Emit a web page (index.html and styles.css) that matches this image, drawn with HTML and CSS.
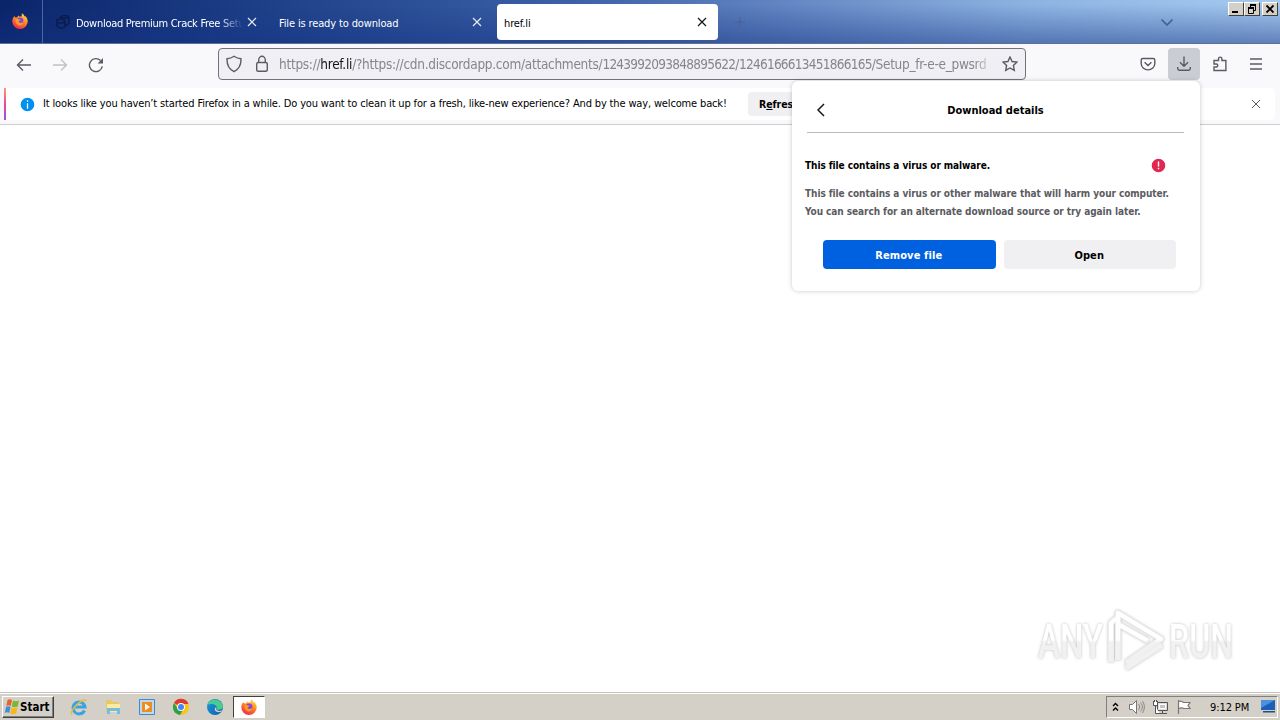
FILE: index.html
```html
<!DOCTYPE html>
<html>
<head>
    <meta charset="utf-8" />
    <title>href.li</title>
    <link rel="stylesheet" href="styles.css">
</head>
<body>
    <svg class="defs">
        <defs>
            <linearGradient id="fox" x1="0.8" y1="0" x2="0.3" y2="1">
                <stop offset="0" stop-color="#ffe14a" />
                <stop offset="0.45" stop-color="#ff8a1e" />
                <stop offset="1" stop-color="#f0264f" />
            </linearGradient>
            <linearGradient id="edge" x1="0" y1="0" x2="1" y2="1">
                <stop offset="0" stop-color="#1aa0e0" />
                <stop offset="1" stop-color="#0c59a4" />
            </linearGradient>
            <linearGradient id="mark" gradientUnits="userSpaceOnUse" x1="0" y1="34" x2="0" y2="36">
                <stop offset="0" stop-color="#fff" />
                <stop offset="1" stop-color="#f1f1f1" />
            </linearGradient>
            <symbol id="firefox" viewBox="0 0 16 16">
                <path fill="url(#fox)" d="M2.2 3.2 3.6 4.6 5.4 4.2 6.2 2.4 7.4 3.6 9.6 3.4 9.9 0.3C11.4 1.1 12.2 2.5 12.8 3.6L13.6 3.2C15 4.8 15.8 6.6 15.7 8.6A7.7 7.4 0 0 1 .3 8.6C.2 6.4 1 4.6 2.2 3.2z" />
                <circle cx="8.2" cy="7.6" r="3.2" fill="#8a45d8" />
                <path fill="#ff9b22" d="M3.6 6.2C5.2 5.6 6.4 6.2 8.6 6.6 8.4 7.8 6.8 7.8 6.6 8.6 6.9 10.4 9.4 10.2 11 9.2 10.6 11.8 8.4 13 6.4 12.2 4.2 11.2 3 9 3.6 6.2z" />
            </symbol>
            <symbol id="cross" viewBox="0 0 10 10">
                <path d="M1 1l8 8M9 1l-8 8" />
            </symbol>
        </defs>
    </svg>

    <div class="tabbar">
        <div class="firefox-view">
            <svg width="16" height="16"><use href="#firefox" /></svg>
        </div>
        <div class="tab">
            <svg class="favicon" width="16" height="16" viewBox="0 0 16 16"><path d="M5 4C6 1 12 1 14 3V9C12 12 9 11 9 11M2 6C4 4 9 5 10 7V13C7 15 3 14 2 12zM2 8c3 2 6 1 8 0M6 3c3 2 6 1 8 0" /></svg>
            <span class="tab-label label-fade">Download Premium Crack Free Setu</span>
            <svg class="tab-close" width="10" height="10"><use href="#cross" /></svg>
        </div>
        <div class="tab">
            <span class="tab-label">File is ready to download</span>
            <svg class="tab-close" width="10" height="10"><use href="#cross" /></svg>
        </div>
        <div class="tab tab-active">
            <span class="tab-label">href.li</span>
            <svg class="tab-close" width="10" height="10"><use href="#cross" /></svg>
        </div>
        <svg class="tab-new" width="10" height="10" viewBox="0 0 10 10"><path d="M5 0v10M0 5h10" /></svg>
        <svg class="tab-list" width="14" height="8" viewBox="0 0 14 8"><path d="M1.5 1.5 7 7l5.500-5.500" /></svg>
        <div class="window-buttons">
            <span class="win-btn"><svg width="12" height="10" viewBox="0 0 12 10"><path d="M2 8h6" stroke-width="2" /></svg></span>
            <span class="win-btn"><svg width="12" height="10" viewBox="0 0 12 10"><path d="M4 1h6M2 4h6" stroke-width="2" /><path d="M4.500 2v2M9.500 2v4.500H8M2.500 4v5.500h5V4" /></svg></span>
            <span class="win-btn win-close"><svg width="12" height="10" viewBox="0 0 12 10"><path d="M2.500 1.500l7 7M9.500 1.500l-7 7" stroke-width="1.800" /></svg></span>
        </div>
    </div>

    <div class="navbar">
        <div class="nav-history">
            <svg width="16" height="16" viewBox="0 0 16 16"><path d="M15 8H1.500M7 2.500 1.500 8l5.500 5.500" /></svg>
            <svg class="disabled" width="16" height="16" viewBox="0 0 16 16"><path d="M1 8h13.500M9 2.500l5.500 5.500-5.500 5.500" /></svg>
            <svg width="16" height="16" viewBox="0 0 16 16"><path d="M14.300 9.400A6.500 6.500 0 1 1 12.500 3.500" /><path class="solid" d="M15 1v5.400H9.600z" /></svg>
        </div>
        <div class="urlbar">
            <svg width="16" height="18" viewBox="0 0 16 18"><path d="M8 1.300C10 2.700 12.500 3.600 15 3.800 15.200 9.500 13 14.300 8 16.700 3 14.300.8 9.500 1 3.800 3.500 3.600 6 2.700 8 1.300z" /></svg>
            <svg class="lock" width="14" height="18" viewBox="0 0 14 18"><rect x="1.700" y="7.500" width="10.600" height="8.800" rx="1.500" /><path d="M3.700 7.500V5a3.300 3.700 0 0 1 6.600 0v2.500" /></svg>
            <span class="url">https://<b>href.li</b>/?https://cdn.discordapp.com/attachments/<span class="digits">1243992093848895622</span>/<span class="digits">1246166613451866165</span>/Setup_fr-e-e_pwsrd</span>
            <svg width="16" height="16" viewBox="0 0 16 16"><path d="M8 1l2.100 4.500 4.900.6-3.600 3.400.9 4.900L8 12l-4.300 2.400.9-4.900L1 6.100l4.900-.6z" /></svg>
        </div>
        <div class="nav-tools">
            <span class="tool"><svg width="16" height="16" viewBox="0 0 16 16"><path d="M2.700 2.500h10.600a1.500 1.500 0 0 1 1.500 1.500v3.500a6.800 6.400 0 0 1-13.600 0V4a1.500 1.500 0 0 1 1.500-1.500zM4.600 6.300 8 9.600l3.400-3.300" /></svg></span>
            <span class="tool tool-open"><svg width="16" height="16" viewBox="0 0 16 16"><path d="M8 .5v9.500M4 6.200l4 4 4-4M1.700 11v1.500a1.700 1.700 0 0 0 1.700 1.700h9.200a1.700 1.700 0 0 0 1.700-1.700V11" /></svg></span>
            <span class="tool"><svg width="16" height="16" viewBox="0 0 16 16"><path d="M2 14.500V11H4.300a1.500 1.500 0 0 0 0-3H2V4.500H6.500V2.800a1.700 1.700 0 0 1 3.400 0V4.500h4v10z" /></svg></span>
            <span class="tool"><svg width="16" height="16" viewBox="0 0 16 16"><path d="M2 3h12M2 8h12M2 13h12" /></svg></span>
        </div>
    </div>

    <div class="notification">
        <div class="notification-body">
            <svg class="info" width="15" height="15" viewBox="0 0 15 15"><circle cx="7.500" cy="7.500" r="7.500" /><path d="M7.500 3.200v1.500M7.500 6.200v5.500" /></svg>
            <span class="notification-text">It looks like you haven’t started Firefox in a while. Do you want to clean it up for a fresh, like-new experience? And by the way, welcome back!</span>
            <button class="refresh">R<u>e</u>fresh Firefox…</button>
            <svg class="notification-close" width="10" height="10"><use href="#cross" /></svg>
        </div>
    </div>

    <div class="content"></div>

    <!--下载详情面板-->
    <div class="panel">
        <div class="panel-header">
            <svg width="8" height="14" viewBox="0 0 8 14"><path d="M7 1 1 7l6 6" /></svg>
            <span class="panel-title">Download details</span>
        </div>
        <div class="panel-warning">
            <span>This file contains a virus or malware.</span>
            <svg width="15" height="15" viewBox="0 0 15 15"><circle cx="7.500" cy="7.500" r="7.500" /><path d="M7.500 3.500v5M7.500 9.800v1.500" /></svg>
        </div>
        <p class="panel-text">This file contains a virus or other malware that will harm your computer.<br>You can search for an alternate download source or try again later.</p>
        <div class="panel-buttons">
            <button class="btn btn-primary">Remove file</button>
            <button class="btn">Open</button>
        </div>
    </div>

    <!--水印-->
    <svg class="watermark" width="220" height="80" viewBox="0 0 220 80">
        <text x="4" y="52" textLength="65" lengthAdjust="spacingAndGlyphs">ANY</text>
        <path d="M77 56V17L83 12M84 54V7L127 33 92 57M84 18l30 17M92 62l36-23" class="mark-shade" />
        <path d="M77 56V17L83 12M84 54V7L127 33 92 57M84 18l30 17M92 62l36-23" class="mark" />
        <text x="135" y="52" textLength="64" lengthAdjust="spacingAndGlyphs">RUN</text>
    </svg>

    <div class="taskbar">
        <div class="start">
            <svg width="17" height="16" viewBox="0 0 17 16">
                <path fill="#e8622a" d="M4.500 1C6 0 7.500 0 9 1L7.800 7C6.300 6 4.800 6 3.300 7z" />
                <path fill="#7db72f" d="M10 1.400c1.500 1 4 1 6 0L14.700 7.500c-2 1-4.500 1-5.900 0z" />
                <path fill="#3f8fd8" d="M3 8c1.500-1 3-1 4.500 0L6.300 14C4.800 13 3.300 13 1.800 14z" />
                <path fill="#f6b91a" d="M8.500 8.400c1.500 1 4 1 6 0l-1.300 6.100c-2 1-4.500 1-5.900 0z" />
            </svg>
            <span>Start</span>
        </div>
        <div class="launch">
            <svg width="18" height="18" viewBox="0 0 18 18"><path fill="none" stroke="#3ba4e0" stroke-width="3" d="M14.500 12.500A6 6 0 1 1 15 9H4" /><path fill="none" stroke="#e8bd3c" stroke-width="1.500" d="M2 16.500C-1 13 12 0 16.500 2.500" /></svg>
            <svg width="18" height="18" viewBox="0 0 18 18"><path fill="#e8c860" d="M2 2h5l1 2h7v10H2z" /><path fill="#faeaa2" d="M3 6h13v8H3z" /><path fill="#75bde3" d="M3 10h13v6h-3v-3H6v3H3z" /></svg>
            <svg width="18" height="18" viewBox="0 0 18 18"><path fill="#b8daf4" stroke="#4888c0" d="M1.500 1.500h15v15h-15z" /><path fill="#f28a1c" d="M4 4h10v10H4z" /><path fill="#fff" d="M7 5.500v7L12 9z" /></svg>
            <svg width="18" height="18" viewBox="0 0 18 18"><circle cx="9" cy="9" r="8" fill="#f9c61b" /><path fill="#df3a2e" d="M9 9 2 5a8 8 0 0 1 14.500 1H9z" /><path fill="#2e9e4f" d="M2 5a8 8 0 0 0 6 12l3.500-6H6z" /><circle cx="9" cy="9" r="3.900" fill="#fff" /><circle cx="9" cy="9" r="3" fill="#4285f4" /></svg>
            <svg width="18" height="18" viewBox="0 0 18 18"><circle cx="9" cy="9" r="8" fill="url(#edge)" /><path fill="#4ccb91" d="M1.500 6.500C4 0 15 0 17 8c0 4-4 4.500-6.500 3.200C12.500 8 8 4.500 1.500 6.500z" /><path fill="#d4d0c8" d="M10.500 8.500c-1.500 4 2 5.500 6 3.500L14.600 14C9 15 7 11 10.500 8.500z" /></svg>
        </div>
        <div class="task-active"><svg width="16" height="16"><use href="#firefox" /></svg></div>
        <div class="tray">
            <svg width="7" height="10" viewBox="0 0 7 10"><path d="M1 4l2.500-2.500L6 4M1 8.500 3.500 6 6 8.500" fill="none" stroke="#000" stroke-width="1.400" /></svg>
            <svg class="sound" width="17" height="16" viewBox="0 0 17 16"><path d="M1.500 5.500h3l4-4v13l-4-4h-3z" fill="#fff" stroke="#777" /><path d="M10.500 5c1.500 2 1.500 4 0 6M12.500 3.500c2.500 3 2.500 6 0 9M14.500 2c2.500 4 2.500 8 0 12" fill="none" stroke="#888" /></svg>
            <svg class="network" width="17" height="16" viewBox="0 0 17 16"><path d="M5.500 3.500h10v8h-10zM7 14.500h8M10.500 12v2" fill="#ddd" stroke="#555" /><path d="M7.500 5.500h6v4h-6z" fill="#c4c4c4" stroke="#fff" /><path d="M1.500 2v4.500h4V2M3.500 7v7.500h4M2.500 1v2M4.500 1v2" fill="#fff" stroke="#555" /></svg>
            <svg class="flag" width="17" height="16" viewBox="0 0 17 16"><path d="M2.500 1v14M2.500 2.500c3-1 4 0 5 1h6.500l-2 3 2 3H8c-2-1-3-1-5.500 0" fill="#fff" stroke="#777" stroke-width="1.200" /></svg>
            <span class="clock">9:12 PM</span>
            <svg width="16" height="13" viewBox="0 0 16 13"><path d="M1 0h14v10H1z" fill="#1d5fb8" /><path d="M1 0h14L1 8z" fill="#4c91dc" /><path d="M3 11h12v1.500H3z" fill="#264b7e" /></svg>
        </div>
    </div>
</body>
</html>
```

FILE: styles.css
```css
* {
    box-sizing: border-box
}

body {
    margin: 0;
    width: 1280px;
    height: 720px;
    overflow: hidden;
    display: flex;
    flex-direction: column;
    position: relative;
    background: #fff;
    color: #000;
    font-family: "DejaVu Sans Condensed", "DejaVu Sans", sans-serif;
    font-stretch: condensed;
    font-size: 11px;
    white-space: nowrap
}

svg {
    flex: none;
    display: block
}

button {
    font: inherit;
    border: 0;
    padding: 0
}

.defs {
    position: absolute;
    width: 0;
    height: 0
}

/*标签栏*/
.tabbar {
    display: flex;
    align-items: center;
    flex: none;
    height: 44px;
    background: linear-gradient(to bottom, transparent 10%, rgba(20,50,130,.48)), linear-gradient(100deg, #0a246a, #1d3f88 20%, #3d62a8 45%, #6688c4 62%, #8db3e2 80%, #a6caf0);
    border-bottom: 1px solid #5f7094
}

.firefox-view {
    width: 43px;
    height: 43px;
    margin-right: 4px;
    padding: 13px 0 0 12px;
    border-right: 1px solid #4b67a0
}

.tab {
    display: flex;
    align-items: center;
    width: 221px;
    height: 36px;
    margin: 0 4px 0 0;
    padding: 0 11px 0 7px;
    border-radius: 4px;
    color: #fff
}

.favicon {
    margin: 0 5px 0 1px;
    fill: none;
    stroke: #0b1d4e;
    stroke-width: 1.5
}

.tab-label {
    flex: 1;
    padding-top: 3px;
    letter-spacing: -.14px
}

.label-fade {
    overflow: hidden;
    margin-right: 4px;
    letter-spacing: -.28px;
    -webkit-mask-image: linear-gradient(to left, transparent, #000 24px);
    mask-image: linear-gradient(to left, transparent, #000 24px)
}

.tab-close {
    fill: none;
    stroke: #e6ebf7;
    stroke-width: 1.2
}

.tab-active {
    background: #fff;
    color: #000
}

    .tab-active .tab-close {
        stroke: #15141a
    }

.tab-new {
    margin-left: 13px;
    fill: none;
    stroke: #4a5f91
}

.tab-list {
    margin-left: auto;
    fill: none;
    stroke: #405a8d;
    stroke-width: 1.5
}

.window-buttons {
    display: flex;
    align-self: flex-start;
    margin: 2px 2px 0 54px
}

.win-btn {
    width: 16px;
    height: 14px;
    padding: 1px;
    background: #d4d0c8;
    border: 1px solid;
    border-color: #fff #404040 #404040 #fff
}

    .win-btn svg {
        fill: none;
        stroke: #000
    }

.win-close {
    margin-left: 2px
}

/*导航栏*/
.navbar {
    display: flex;
    align-items: center;
    flex: none;
    height: 44px;
    padding: 0 8px 4px 16px;
    background: #f9f9fb
}

    .navbar svg {
        fill: none;
        stroke: #5b5b66;
        stroke-width: 1.4
    }

    .navbar .disabled {
        stroke: #c0c0c6
    }

    .navbar .solid {
        fill: #5b5b66;
        stroke: none
    }

.nav-history {
    display: flex;
    gap: 20px;
    padding-top: 1px
}

.urlbar {
    display: flex;
    align-items: center;
    width: 808px;
    height: 32px;
    margin-left: 114px;
    padding: 0 7px;
    background: #f0f0f4;
    border: 1px solid #72727a;
    border-radius: 4px
}

.lock {
    margin: 0 10px 0 13px
}

.url {
    flex: 1;
    overflow: hidden;
    margin-right: 8px;
    color: #85858d;
    font-size: 13.500px;
    letter-spacing: -.28px;
    -webkit-mask-image: linear-gradient(to left, transparent, #000 20px);
    mask-image: linear-gradient(to left, transparent, #000 20px)
}

    .url b {
        color: #15141a;
        font-weight: normal
    }

.digits {
    letter-spacing: -.74px
}

.nav-tools {
    display: flex;
    gap: 4px;
    margin-left: auto
}

.tool {
    width: 32px;
    height: 32px;
    padding: 8px;
    border-radius: 4px
}

.tool-open {
    background: #cbcdd4
}

/*通知栏*/
.notification {
    flex: none;
    height: 37px;
    padding: 0 5px 4px 4px;
    background: #f9f9fb;
    border-bottom: 1px solid #ccc
}

.notification-body {
    display: flex;
    align-items: center;
    height: 32px;
    padding: 0 14px;
    background: linear-gradient(#f79a72, #e84a9a 50%, #9059d8) no-repeat left / 2px 100%, #fff;
    border-radius: 0 4px 4px 0
}

.info {
    margin: 0 8px 0 2px;
    fill: #0090ed;
    stroke: #fff;
    stroke-width: 1.3
}

.notification-text {
    width: 705px;
    padding-bottom: 2px;
    letter-spacing: -.15px
}

.refresh {
    width: 112px;
    height: 24px;
    background: #f0f0f2;
    border-radius: 4px;
    font-weight: bold;
    font-size: 10.500px;
    letter-spacing: -.1px
}

.notification-close {
    margin-left: auto;
    fill: none;
    stroke: #5b5b66
}

.content {
    flex: 1
}

/*下载面板*/
.panel {
    position: absolute;
    left: 792px;
    top: 81px;
    width: 408px;
    height: 210px;
    padding: 0 16px 0 13px;
    background: #fff;
    border-radius: 6px;
    box-shadow: 0 0 4px rgba(58,57,68,.28);
    font-weight: bold
}

.panel-header {
    display: flex;
    align-items: center;
    height: 52px;
    margin-left: 2px;
    padding: 6px 0 0 10px;
    border-bottom: 1px solid #b8b8bc
}

    .panel-header svg {
        fill: none;
        stroke: #15141a;
        stroke-width: 1.5
    }

.panel-title {
    flex: 1;
    padding: 2px 18px 0 0;
    text-align: center
}

.panel-warning {
    display: flex;
    align-items: center;
    justify-content: space-between;
    height: 15px;
    margin-top: 25px;
    padding-right: 18px;
    font-size: 10px;
    letter-spacing: -.07px
}

    .panel-warning svg {
        fill: #e22850;
        stroke: #fff;
        stroke-width: 1.4
    }

.panel-text {
    margin: 12px 0 0;
    color: #5b5b5f;
    font-size: 10px;
    line-height: 18px;
    letter-spacing: -.07px
}

.panel-buttons {
    display: flex;
    gap: 8px;
    margin: 19px 0 0 18px;
    width: 353px
}

.btn {
    flex: 1;
    height: 29px;
    padding: 1px 1px 0 0;
    background: #f0f0f2;
    border-radius: 4px;
    letter-spacing: .1px
}

.btn-primary {
    background: #0061e0;
    color: #fff
}

.watermark {
    position: absolute;
    left: 1034px;
    top: 606px;
    filter: drop-shadow(0 0 1.500px rgba(0,0,0,.25))
}

    .watermark text {
        font: 500 49px Roboto, sans-serif;
        fill: url(#mark)
    }

.mark, .mark-shade {
    fill: none;
    stroke: url(#mark);
    stroke-width: 4;
    stroke-linejoin: round
}

.mark-shade {
    stroke: #ececec;
    stroke-width: 6
}

/*任务栏*/
.taskbar {
    display: flex;
    align-items: center;
    flex: none;
    height: 28px;
    padding: 1px 2px 1px;
    background: #d4d0c8;
    border-top: 1px solid #c4c1ba;
    box-shadow: inset 0 1px #fff
}

.start {
    display: flex;
    align-items: center;
    width: 52px;
    height: 22px;
    border: 1px solid;
    border-color: #fff #404040 #404040 #fff;
    box-shadow: inset -1px -1px #808080;
    font-weight: bold;
    font-size: 11.500px
}

.launch {
    display: flex;
    gap: 16px;
    margin: 0 9px 0 16px
}

.task-active {
    width: 32px;
    height: 22px;
    padding: 2px 7px;
    background: #fff;
    border: 1px solid;
    border-color: #404040 #fff #fff #404040
}

.tray {
    display: flex;
    align-items: center;
    width: 172px;
    height: 22px;
    margin-left: auto;
    padding-left: 5px;
    border: 1px solid;
    border-color: #808080 #fff #fff #808080
}

.sound {
    margin-left: 9px
}

.network {
    margin-left: 7px
}

.flag {
    margin-left: 7px
}

.clock {
    width: 50px;
    margin-left: 17px;
    padding-top: 1px;
    letter-spacing: -.1px
}
```
